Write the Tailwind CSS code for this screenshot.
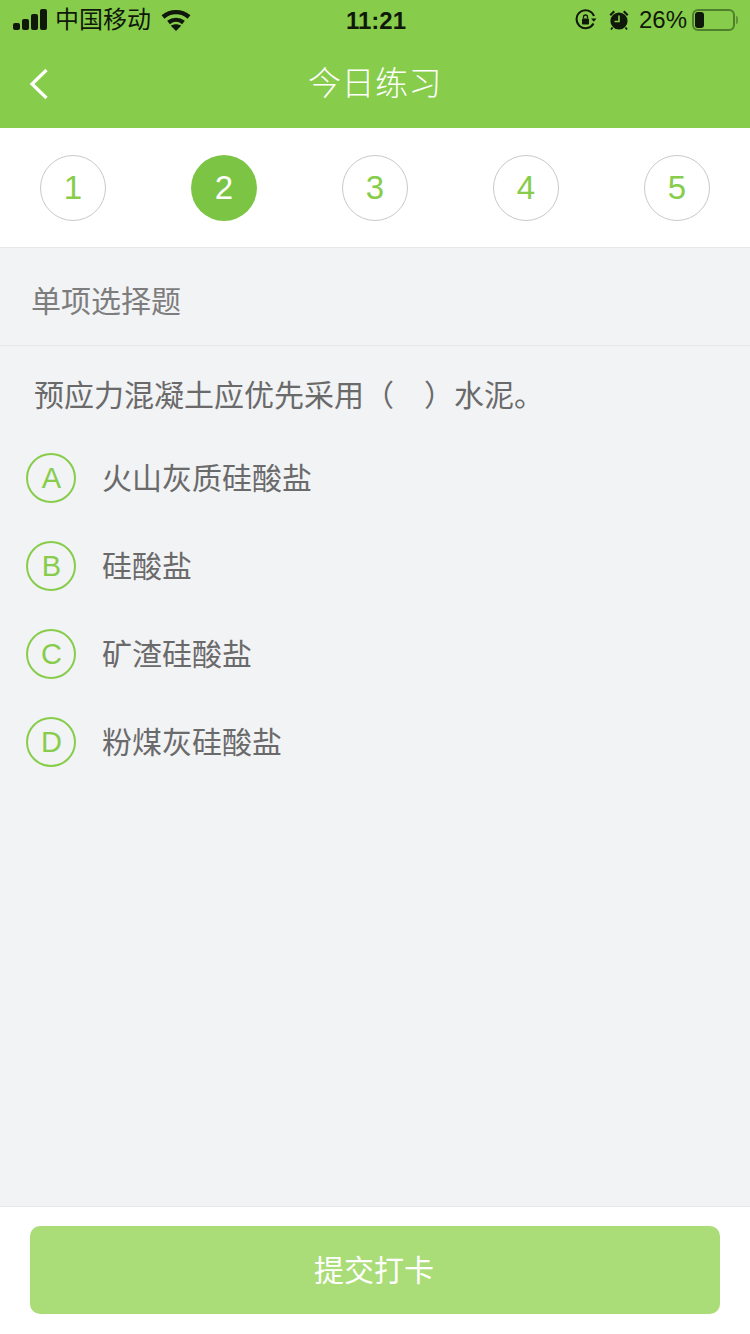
<!DOCTYPE html>
<html lang="zh-CN">
<head>
    <meta charset="UTF-8">
    <meta name="viewport" content="width=device-width, initial-scale=1.0">
    <title>今日练习</title>
    <script src="https://cdn.jsdelivr.net/npm/@tailwindcss/browser@4"></script>
</head>
<body class="bg-[#f2f3f5] font-['Liberation_Sans','Noto_Sans_CJK_SC',sans-serif]">
<div class="w-[750px] h-[1334px] flex flex-col overflow-hidden">
    <!-- status bar + nav -->
    <header class="bg-[#87cd4b] h-[128px] shrink-0">
        <div class="h-[40px] flex items-center justify-between pl-[13px] pr-[12px] text-[#10180a] relative">
            <div class="flex items-center">
                <svg width="34" height="22" viewBox="0 0 34 22" fill="currentColor">
                    <rect x="0" y="14" width="7" height="7" rx="2"/>
                    <rect x="9" y="10" width="7" height="11" rx="2"/>
                    <rect x="18" y="5" width="7" height="16" rx="2"/>
                    <rect x="27" y="0" width="7" height="21" rx="2"/>
                </svg>
                <span class="ml-[8px] text-[24px] leading-[40px]">中国移动</span>
                <svg class="ml-[10px]" width="30" height="22" viewBox="0 0 30 22" fill="none" stroke="currentColor" stroke-width="4.400">
                    <path d="M2 8C9.500 1.500 20.500 1.500 28 8"/>
                    <path d="M7.500 13.500C12 10 18 10 22.500 13.500"/>
                    <path d="M15 22L9.800 16.800C12.800 14.800 17.200 14.800 20.200 16.800Z" fill="currentColor" stroke="none"/>
                </svg>
            </div>
            <span class="absolute left-[346px] top-0 text-[24px] leading-[42px] font-bold">11:21</span>
            <div class="flex items-center">
                <svg width="22" height="22" viewBox="0 0 22 22" fill="none" stroke="currentColor" stroke-width="2">
                    <path d="M18.500 14.500A9 9 0 1 1 19 7"/>
                    <path d="M16 9.500h5.500l-2.700 3.200Z" fill="currentColor" stroke="none"/>
                    <rect x="7" y="9.500" width="7" height="6" rx="1" fill="currentColor" stroke="none"/>
                    <path d="M8.500 9.500V8a2 2 0 0 1 4 0v1.500" stroke-width="1.300"/>
                </svg>
                <svg class="ml-[11px]" width="22" height="22" viewBox="0 0 22 22" fill="currentColor">
                    <circle cx="11" cy="12" r="8.600"/>
                    <path d="M1.500 5.500L5.500 1.500L7 3L3 7Z M20.500 5.500L16.500 1.500L15 3L19 7Z"/>
                    <path d="M4.500 18.500L3 20.500M17.500 18.500L19 20.500" stroke="currentColor" stroke-width="1.800"/>
                    <path d="M11 6.500V12.500H6.500" fill="none" stroke="#87cd4b" stroke-width="1.600"/>
                </svg>
                <span class="ml-[9px] text-[24px] leading-[40px]">26%</span>
                <div class="ml-[5px] flex items-center">
                    <div class="w-[43px] h-[22px] rounded-[6px] border-2 border-[#4f7f2c] p-[1px]">
                        <div class="w-[9px] h-full rounded-[3px] bg-[#10180a]"></div>
                    </div>
                    <div class="ml-[1px] w-[2px] h-[8px] rounded-r-sm bg-[#5f9438]"></div>
                </div>
            </div>
        </div>
        <div class="h-[88px] flex items-center justify-center relative">
            <svg class="absolute left-[29px] top-[28px]" width="20" height="32" viewBox="0 0 20 32" fill="none" stroke="#ffffff" stroke-width="3.200">
                <path d="M17.500 2L3 16L17.500 30"/>
            </svg>
            <h1 class="text-[33px] leading-[88px] text-white font-light tracking-[0.5px]">今日练习</h1>
        </div>
    </header>

    <!-- question numbers -->
    <nav class="bg-white h-[120px] shrink-0 border-b border-[#e6e7e9] px-[40px] flex items-center justify-between">
        <div class="w-[66px] h-[66px] rounded-full border border-[#c9c9c9] flex items-center justify-center text-[33px] text-[#87cd4b]">1</div>
        <div class="w-[66px] h-[66px] rounded-full bg-[#7cc544] flex items-center justify-center text-[33px] text-white">2</div>
        <div class="w-[66px] h-[66px] rounded-full border border-[#c9c9c9] flex items-center justify-center text-[33px] text-[#87cd4b]">3</div>
        <div class="w-[66px] h-[66px] rounded-full border border-[#c9c9c9] flex items-center justify-center text-[33px] text-[#87cd4b]">4</div>
        <div class="w-[66px] h-[66px] rounded-full border border-[#c9c9c9] flex items-center justify-center text-[33px] text-[#87cd4b]">5</div>
    </nav>

    <main class="flex-1">
        <div class="h-[98px] border-b border-[#e6e7e9] pl-[31px] pt-[9px] flex items-center text-[30px] text-[#7d7d7d]">单项选择题</div>
        <p class="pl-[34px] mt-[30px] text-[30px] leading-[40px] text-[#6a6a6a]">预应力混凝土应优先采用（　）水泥。</p>
        <ul class="mt-[18px]">
            <li class="h-[88px] pl-[26px] flex items-center">
                <span class="w-[50px] h-[50px] rounded-full border-2 border-[#87cd4b] pl-[1px] pt-[1px] flex items-center justify-center text-[29px] text-[#87cd4b]">A</span>
                <span class="ml-[26px] text-[30px] text-[#6a6a6a]">火山灰质硅酸盐</span>
            </li>
            <li class="h-[88px] pl-[26px] flex items-center">
                <span class="w-[50px] h-[50px] rounded-full border-2 border-[#87cd4b] pl-[1px] pt-[1px] flex items-center justify-center text-[29px] text-[#87cd4b]">B</span>
                <span class="ml-[26px] text-[30px] text-[#6a6a6a]">硅酸盐</span>
            </li>
            <li class="h-[88px] pl-[26px] flex items-center">
                <span class="w-[50px] h-[50px] rounded-full border-2 border-[#87cd4b] pl-[1px] pt-[1px] flex items-center justify-center text-[29px] text-[#87cd4b]">C</span>
                <span class="ml-[26px] text-[30px] text-[#6a6a6a]">矿渣硅酸盐</span>
            </li>
            <li class="h-[88px] pl-[26px] flex items-center">
                <span class="w-[50px] h-[50px] rounded-full border-2 border-[#87cd4b] pl-[1px] pt-[1px] flex items-center justify-center text-[29px] text-[#87cd4b]">D</span>
                <span class="ml-[26px] text-[30px] text-[#6a6a6a]">粉煤灰硅酸盐</span>
            </li>
        </ul>
    </main>

    <footer class="bg-white h-[128px] shrink-0 border-t border-[#e6e7e9] px-[30px] pt-[19px]">
        <button class="w-full h-[88px] rounded-[10px] bg-[#aadc78] text-white text-[30px] pr-[2px]">提交打卡</button>
    </footer>
</div>
</body>
</html>
